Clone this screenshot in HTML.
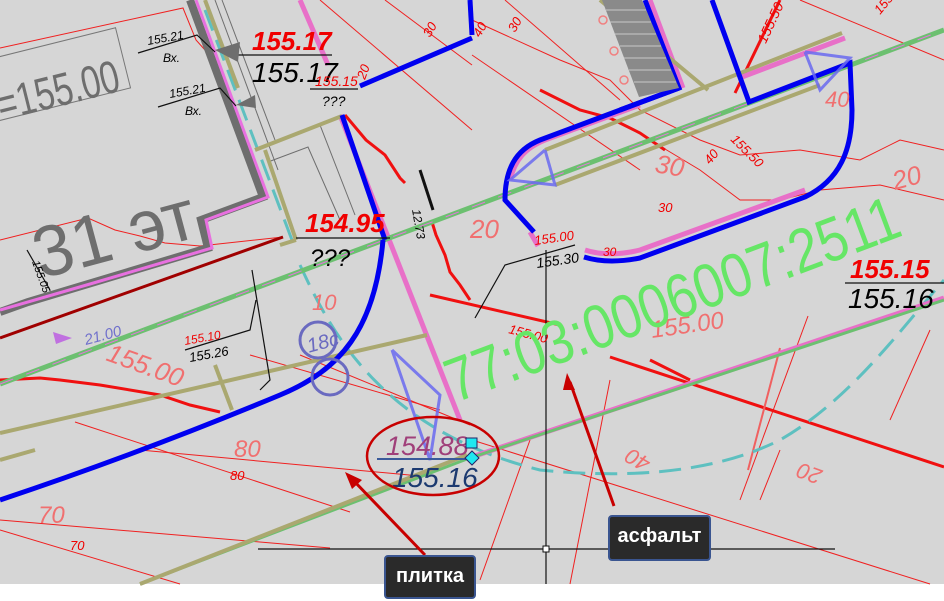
<!DOCTYPE html>
<html><head><meta charset="utf-8"><style>
html,body{margin:0;padding:0;background:#fff;}
svg{display:block}
.t{font-family:"Liberation Sans",sans-serif;font-style:italic}
.lbl{position:absolute;background:#2a2a2a;border:2px solid #3a5590;border-radius:4px;color:#fff;font:bold 20px "Liberation Sans","DejaVu Sans",sans-serif;box-sizing:border-box;text-align:center;line-height:38px}
</style></head><body>
<div style="position:relative;width:944px;height:601px;overflow:hidden">
<svg width="944" height="601" viewBox="0 0 944 601" xmlns="http://www.w3.org/2000/svg">
<rect x="0" y="0" width="944" height="584" fill="#d6d6d6"/>
<rect x="0" y="584" width="944" height="17" fill="#fff"/>
<g stroke="#f02020" stroke-width="1" fill="none">
<polyline points="0,48 183,8 196,40 205,50"/>
<polyline points="0,240 88,218 115,230 140,236 165,243 200,246 283,237"/>
<line x1="320" y1="0" x2="472" y2="130"/>
<line x1="385" y1="0" x2="472" y2="65"/>
<line x1="472" y1="55" x2="640" y2="170"/>
<line x1="505" y1="0" x2="620" y2="100"/>
<polyline points="472,20 560,60 610,80 640,110 700,140 740,155 800,150 860,160 900,140 944,150"/>
<polyline points="650,140 700,170 740,200 780,200 820,190 880,185 944,200"/>
<line x1="0" y1="520" x2="330" y2="548"/>
<line x1="0" y1="530" x2="180" y2="584"/>
<line x1="140" y1="450" x2="420" y2="476"/>
<line x1="75" y1="422" x2="350" y2="512"/>
<line x1="300" y1="355" x2="470" y2="425"/>
<line x1="250" y1="355" x2="440" y2="410"/>
<line x1="472" y1="440" x2="930" y2="584"/>
<line x1="800" y1="0" x2="944" y2="60"/>
<line x1="610" y1="380" x2="570" y2="584"/>
<line x1="530" y1="440" x2="480" y2="580"/>
<line x1="808" y1="316" x2="740" y2="500"/>
<line x1="930" y1="330" x2="890" y2="420"/>
<line x1="780" y1="450" x2="760" y2="500"/>
</g>
<g stroke="#f01010" stroke-width="3" fill="none">
<line x1="610" y1="357" x2="944" y2="467"/>
<polyline points="345,115 366,140 385,155 400,178 405,183"/>
<polyline points="432,222 436,235 445,255 450,272 460,285 470,300"/>
<polyline points="0,380 40,378 60,380 100,385 160,395 190,405 220,412"/>
<polyline points="650,360 690,380"/>
<polyline points="540,90 580,110 610,118 640,133 665,150"/>
<line x1="780" y1="0" x2="735" y2="93"/>
<line x1="430" y1="295" x2="560" y2="325"/>
</g>
<line x1="780" y1="348" x2="748" y2="470" stroke="#f06060" stroke-width="2"/>
<polyline points="190,0 263,197 201,220 208,248 28,302 0,312" fill="none" stroke="#6e6e6e" stroke-width="8"/>
<polyline points="196,0 268,197 206,220 212,248 90,284 0,310" fill="none" stroke="#e870e0" stroke-width="3"/>
<line x1="283" y1="237" x2="0" y2="338" stroke="#a00000" stroke-width="3"/>
<line x1="215" y1="0" x2="278" y2="170" stroke="#6e6e6e" stroke-width="1"/>
<line x1="222" y1="0" x2="275" y2="140" stroke="#6e6e6e" stroke-width="1"/>
<line x1="320" y1="125" x2="355" y2="215" stroke="#6e6e6e" stroke-width="1"/>
<polyline points="268,162 308,147 340,220" fill="none" stroke="#6e6e6e" stroke-width="1"/>
<g stroke="#5ec0c0" stroke-width="3" fill="none" stroke-dasharray="22,10">
<line x1="205" y1="10" x2="295" y2="248"/>
<path d="M300,265 C330,330 380,430 540,470 C640,480 720,470 780,440 C850,400 900,330 944,280"/>
</g>
<g stroke="#e870c8" stroke-width="5" fill="none">
<line x1="300" y1="0" x2="328" y2="65"/>
<line x1="340" y1="115" x2="460" y2="420"/>
<line x1="472" y1="457" x2="944" y2="298"/>
<line x1="742" y1="77" x2="845" y2="38"/>
<line x1="650" y1="0" x2="683" y2="88"/>
<path d="M510,180 C515,160 525,148 545,140 L640,105"/>
<path d="M530,232 L538,246 M585,250 C600,255 620,255 640,250 L805,190"/>
</g>
<line x1="0" y1="384" x2="944" y2="30" stroke="#6cc070" stroke-width="5"/>
<line x1="0" y1="384" x2="944" y2="30" stroke="#e870e0" stroke-width="1" stroke-dasharray="14,14"/>
<polyline points="140,584 467,459 944,300" fill="none" stroke="#6cc070" stroke-width="3"/>
<polyline points="140,584 467,455" fill="none" stroke="#aaa870" stroke-width="4"/>
<g stroke="#aaa870" stroke-width="4" fill="none">
<line x1="0" y1="433" x2="427" y2="335"/>
<line x1="545" y1="150" x2="842" y2="33"/>
<line x1="555" y1="185" x2="820" y2="85"/>
<line x1="255" y1="150" x2="342" y2="116"/>
<line x1="265" y1="150" x2="296" y2="240"/>
<line x1="296" y1="240" x2="280" y2="245"/>
<line x1="215" y1="365" x2="232" y2="410"/>
<line x1="0" y1="460" x2="35" y2="450"/>
<line x1="205" y1="0" x2="238" y2="88"/>
<line x1="600" y1="0" x2="708" y2="90"/>
</g>
<g stroke="#0000f0" stroke-width="5" fill="none">
<path d="M0,500 C120,460 220,420 280,395 C340,370 375,330 383,240"/>
<line x1="342" y1="115" x2="385" y2="240"/>
<line x1="360" y1="86" x2="472" y2="38"/>
<line x1="470" y1="0" x2="472" y2="35"/>
<polyline points="645,0 679,88 620,110"/>
<path d="M679,88 L540,140 C515,150 505,170 505,200 L534,232"/>
<path d="M584,257 C600,262 620,262 640,258 L805,197 C840,180 852,150 852,110 L850,63 L749,102 L712,0"/>
</g>
<polygon points="602,0 642,0 679,88 639,97" fill="#8a8a8a"/>
<g stroke="#c8c8c8" stroke-width="1">
<line x1="606" y1="10" x2="646" y2="10"/><line x1="610" y1="22" x2="651" y2="22"/><line x1="615" y1="34" x2="656" y2="34"/><line x1="620" y1="46" x2="661" y2="46"/><line x1="624" y1="58" x2="666" y2="58"/><line x1="629" y1="70" x2="671" y2="70"/><line x1="634" y1="82" x2="676" y2="82"/>
</g>
<g fill="none" stroke="#f08080" stroke-width="1.5"><circle cx="603" cy="20" r="4"/><circle cx="614" cy="51" r="4"/><circle cx="624" cy="80" r="4"/></g>
<g stroke="#6a6af0" stroke-width="3" fill="none" opacity="0.85">
<polyline points="545,150 555,185 510,180 545,150"/>
<polyline points="805,52 850,58 820,90 805,52"/>
<polyline points="392,350 440,395 430,460 392,350"/>
</g>
<circle cx="318" cy="340" r="18" fill="none" stroke="#6a6ac0" stroke-width="3"/>
<circle cx="330" cy="377" r="18" fill="none" stroke="#6a6ac0" stroke-width="3"/>
<text x="306" y="350" class="t" font-size="20" fill="#6a6ac0" transform="rotate(-15 318 340)">18c</text>
<line x1="546" y1="250" x2="546" y2="584" stroke="#111" stroke-width="1.2"/>
<line x1="258" y1="549" x2="835" y2="549" stroke="#111" stroke-width="1.2"/>
<rect x="543" y="546" width="6" height="6" fill="#fff" stroke="#111"/>
<g stroke="#111" stroke-width="1.2" fill="none">
<polyline points="138,53 197,35 215,52"/>
<polyline points="158,107 220,88 236,106"/>
<line x1="237" y1="55" x2="332" y2="55"/>
<line x1="310" y1="89" x2="358" y2="89"/>
<line x1="296" y1="238" x2="390" y2="238"/>
<polyline points="252,270 270,380 260,390"/>
<polyline points="185,350 250,330 256,300"/>
<line x1="845" y1="283" x2="944" y2="283"/>
<polyline points="475,318 505,265 575,245"/>
<line x1="27" y1="250" x2="50" y2="290"/>
<line x1="420" y1="170" x2="433" y2="210" stroke-width="3"/>
</g>
<line x1="377" y1="459" x2="470" y2="459" stroke="#3a5a9a" stroke-width="2"/>
<polygon points="215,50 240,42 238,62" fill="#6e6e6e"/>
<polygon points="236,105 255,95 256,108" fill="#6e6e6e"/>
<polygon points="53,332 72,338 56,344" fill="#c070e0"/>
<rect x="-40" y="45" width="165" height="62" fill="none" stroke="#777" stroke-width="1" transform="rotate(-14 50 75)"/>
<text x="-5" y="108" font-family="Liberation Sans,sans-serif" font-size="46" fill="#6e6e6e" textLength="125" lengthAdjust="spacingAndGlyphs" transform="rotate(-14 50 90)">=155.00</text>
<text x="30" y="262" font-family="Liberation Sans,sans-serif" font-size="72" fill="#6e6e6e" textLength="165" lengthAdjust="spacingAndGlyphs" transform="rotate(-15 100 230)">31 эт</text>
<g class="t">
<text x="252" y="50" font-size="26" font-weight="bold" fill="#f00000">155.17</text>
<text x="252" y="82" font-size="28" fill="#000">155.17</text>
<text x="315" y="86" font-size="14" fill="#f00000">155.15</text>
<text x="322" y="106" font-size="14" fill="#000">???</text>
<text x="148" y="45" font-size="12" fill="#000" transform="rotate(-10 148 45)">155.21</text>
<text x="163" y="62" font-size="12" fill="#000">Вх.</text>
<text x="170" y="98" font-size="12" fill="#000" transform="rotate(-10 170 98)">155.21</text>
<text x="185" y="115" font-size="12" fill="#000">Вх.</text>
<text x="305" y="232" font-size="26" font-weight="bold" fill="#f00000">154.95</text>
<text x="310" y="266" font-size="24" fill="#000">???</text>
<text x="32" y="262" font-size="11" fill="#000" transform="rotate(70 32 262)">155.05</text>
<text x="185" y="345" font-size="12" fill="#f00000" transform="rotate(-10 185 345)">155.10</text>
<text x="190" y="362" font-size="13" fill="#000" transform="rotate(-10 190 362)">155.26</text>
<text x="86" y="345" font-size="15" fill="#7070cc" transform="rotate(-15 86 345)">21.00</text>
<text x="105" y="360" font-size="26" fill="#f07070" transform="rotate(20 105 360)">155.00</text>
<text x="234" y="457" font-size="24" fill="#f07070">80</text>
<text x="230" y="480" font-size="13" fill="#f00000">80</text>
<text x="38" y="523" font-size="24" fill="#f07070">70</text>
<text x="70" y="550" font-size="13" fill="#f00000">70</text>
<text x="312" y="310" font-size="22" fill="#f07070">10</text>
<text x="470" y="238" font-size="26" fill="#f07070">20</text>
<text x="654" y="172" font-size="26" fill="#f07070" transform="rotate(10 654 172)">30</text>
<text x="658" y="212" font-size="13" fill="#f00000">30</text>
<text x="895" y="190" font-size="26" fill="#f07070" transform="rotate(-15 895 190)">20</text>
<text x="710" y="165" font-size="13" fill="#f00000" transform="rotate(-50 710 165)">40</text>
<text x="825" y="107" font-size="22" fill="#f07070">40</text>
<text x="880" y="15" font-size="13" fill="#f00000" transform="rotate(-50 880 15)">155.50</text>
<text x="760" y="35" font-size="14" fill="#f00000" transform="rotate(-65 770 35)">155.50</text>
<text x="730" y="140" font-size="13" fill="#f00000" transform="rotate(45 730 140)">155.50</text>
<text x="508" y="333" font-size="13" fill="#f00000" transform="rotate(15 508 333)">155.00</text>
<text x="515" y="33" font-size="13" fill="#f00000" transform="rotate(-60 515 33)">30</text>
<text x="480" y="38" font-size="13" fill="#f00000" transform="rotate(-60 480 38)">40</text>
<text x="430" y="38" font-size="13" fill="#f00000" transform="rotate(-60 430 38)">30</text>
<text x="365" y="80" font-size="13" fill="#f00000" transform="rotate(-70 365 80)">20</text>
<text x="412" y="210" font-size="12" fill="#000" transform="rotate(80 412 210)">12.73</text>
<text x="535" y="245" font-size="13" fill="#f00000" transform="rotate(-8 535 245)">155.00</text>
<text x="537" y="268" font-size="14" fill="#000" transform="rotate(-8 537 268)">155.30</text>
<text x="603" y="256" font-size="12" fill="#f00000">30</text>
<text x="652" y="338" font-size="24" fill="#f07070" transform="rotate(-8 652 338)">155.00</text>
<text x="850" y="278" font-size="26" font-weight="bold" fill="#f00000">155.15</text>
<text x="848" y="308" font-size="28" fill="#000">155.16</text>
<text x="386" y="455" font-size="27" fill="#a0407a">154.88</text>
<text x="392" y="487" font-size="28" fill="#1c3a70">155.16</text>
<text x="820" y="490" font-size="22" fill="#f07070" transform="rotate(200 820 480)">20</text>
<text x="672" y="475" font-size="22" fill="#f07070" transform="rotate(210 660 470)">40</text>
<text x="455" y="403" font-size="62" fill="#66e666" font-style="normal" textLength="480" lengthAdjust="spacingAndGlyphs" transform="rotate(-20.5 455 403)">77:03:0006007:2511</text>
</g>
<ellipse cx="433" cy="456" rx="66" ry="39" fill="none" stroke="#c80000" stroke-width="2.5"/>
<rect x="466" y="438" width="11" height="10" fill="#20e8f0" stroke="#226"/>
<polygon points="472,451 479,458 472,465 465,458" fill="#20e8f0" stroke="#226"/>
<g stroke="#c80000" stroke-width="3" fill="#c80000">
<line x1="425" y1="555" x2="353" y2="480"/>
<polygon points="345,472 362,480 352,489" stroke="none"/>
<line x1="614" y1="506" x2="570" y2="382"/>
<polygon points="567,373 575,390 563,390" stroke="none"/>
</g>
</svg>
<div class="lbl" style="left:384px;top:555px;width:92px;height:44px">плитка</div>
<div class="lbl" style="left:608px;top:515px;width:103px;height:46px">асфальт</div>
</div>
</body></html>
